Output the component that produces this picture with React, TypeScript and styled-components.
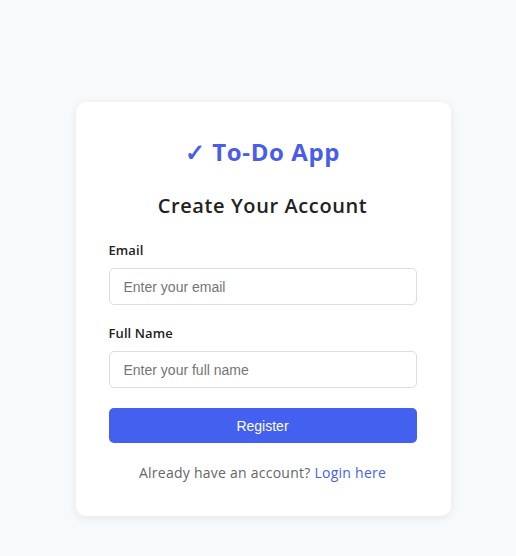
import React from "react";
import styled, { createGlobalStyle } from "styled-components";

const Global = createGlobalStyle`
  html, body { margin: 0; padding: 0; }
  body { background: #f8f9fb; font-family: "Open Sans", "Noto Sans", sans-serif; }
  * { box-sizing: border-box; }
`;

const Page = styled.div`
  min-height: 556px;
  display: flex;
  justify-content: center;
  padding: 102px 0 0 10px;
`;

const Card = styled.div`
  width: 375px;
  height: 414px;
  background: #fff;
  border-radius: 10px;
  box-shadow: 0 2px 10px rgba(0, 0, 0, 0.08);
  padding: 32px 34px 0 33px;
  display: flex;
  flex-direction: column;
`;

const Logo = styled.h1`
  margin: 0;
  text-align: center;
  font-size: 24px;
  font-weight: 700;
  letter-spacing: 0.6px;
  color: #4a5de6;
  line-height: 36px;
`;

const Title = styled.h2`
  margin: 21px 0 0;
  text-align: center;
  font-size: 20px;
  font-weight: 600;
  letter-spacing: 0.6px;
  color: #222;
  line-height: 30px;
`;

const Field = styled.div<{ $top: number }>`
  display: flex;
  flex-direction: column;
  margin-top: ${(p) => p.$top}px;
`;

const Label = styled.label`
  font-size: 13px;
  font-weight: 600;
  letter-spacing: 0.1px;
  color: #222;
  line-height: 20px;
  margin-bottom: 8px;
`;

const Input = styled.input`
  height: 37px;
  width: 100%;
  border: 1px solid #ddd;
  border-radius: 5px;
  padding: 0 14px;
  font-family: "Liberation Sans", Arial, sans-serif;
  font-size: 14px;
  color: #333;
  outline: none;
  &::placeholder { color: #757575; }
`;

const Button = styled.button`
  margin-top: 20px;
  height: 35px;
  width: 100%;
  border: none;
  border-radius: 5px;
  background: #4361ee;
  color: #fff;
  font-family: "Liberation Sans", Arial, sans-serif;
  font-size: 14px;
  cursor: pointer;
`;

const Footer = styled.p`
  margin: 20px 0 0;
  text-align: center;
  font-size: 14px;
  letter-spacing: 0.25px;
  color: #666;
  line-height: 20px;
`;

const Link = styled.a`
  color: #4361ee;
  text-decoration: none;
`;

export default function App() {
  return (
    <>
      <Global />
      <Page>
        <Card>
          <Logo>✓ To-Do App</Logo>
          <Title>Create Your Account</Title>
          <Field $top={19}>
            <Label>Email</Label>
            <Input placeholder="Enter your email" />
          </Field>
          <Field $top={18}>
            <Label>Full Name</Label>
            <Input placeholder="Enter your full name" />
          </Field>
          <Button>Register</Button>
          <Footer>
            Already have an account? <Link href="#">Login here</Link>
          </Footer>
        </Card>
      </Page>
    </>
  );
}
